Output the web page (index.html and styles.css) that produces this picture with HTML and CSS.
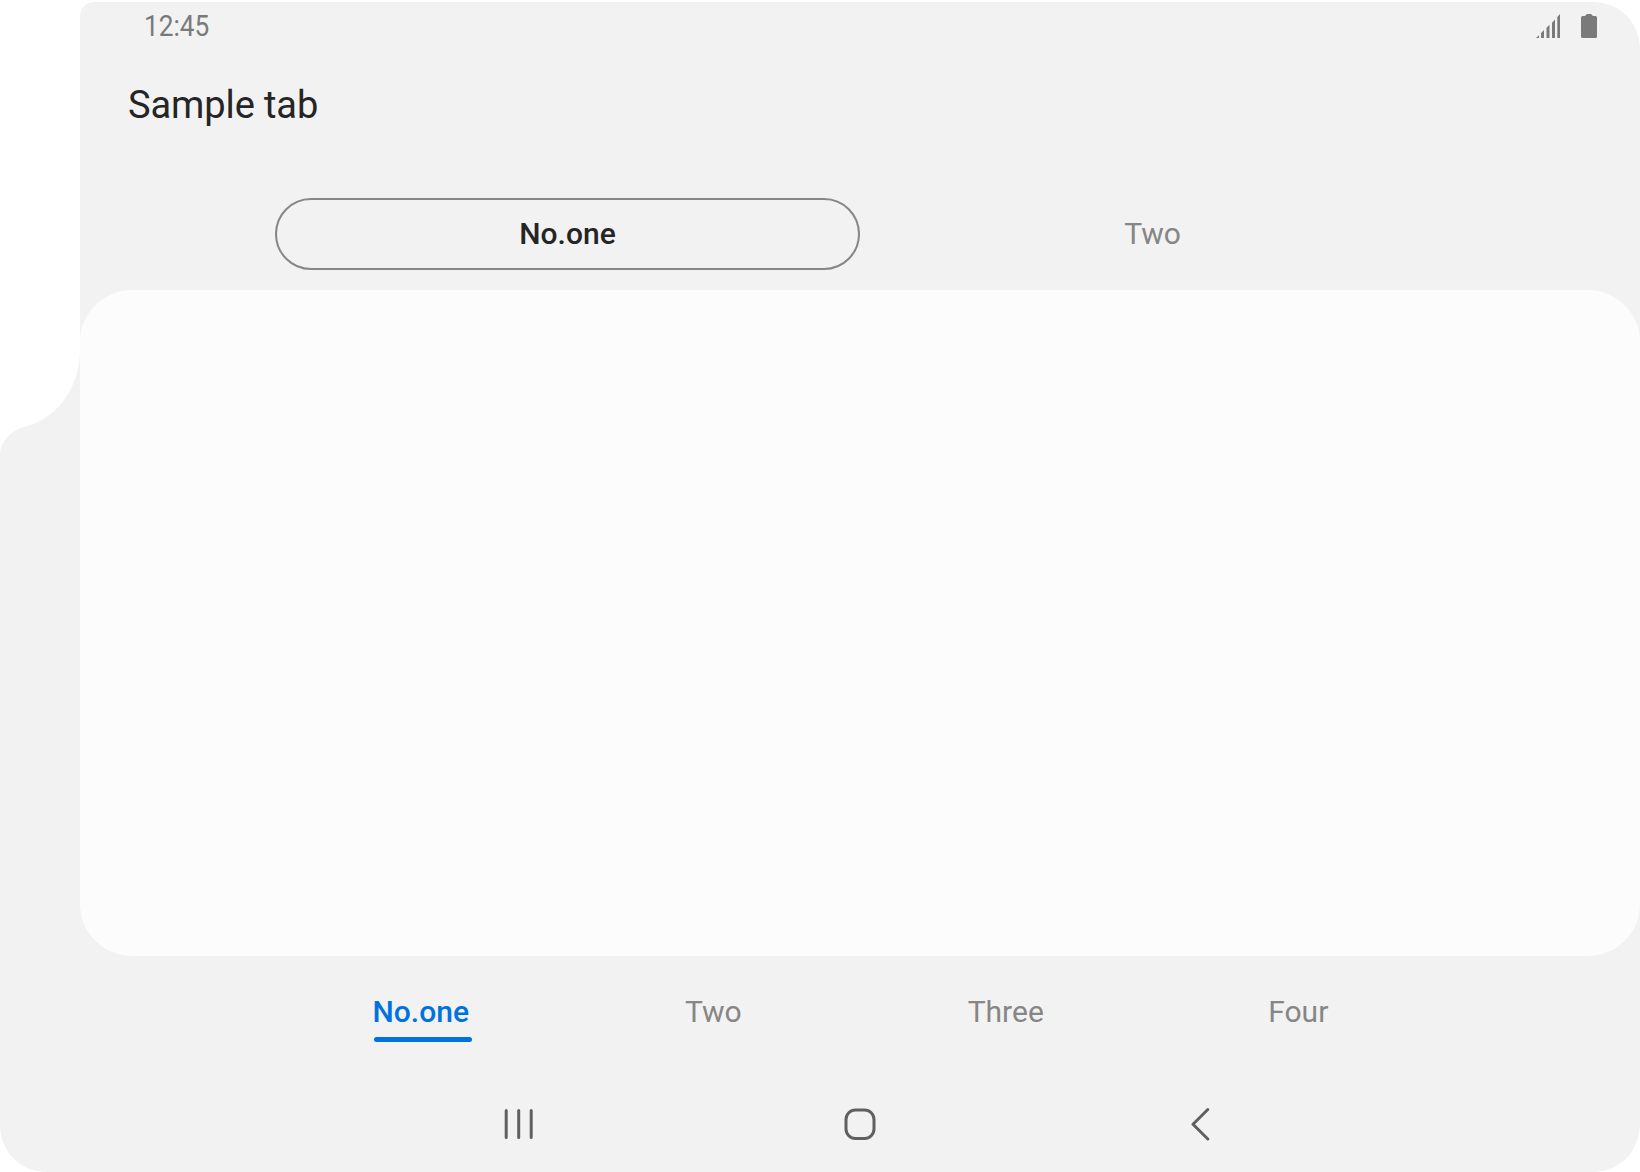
FILE: index.html
```html
<!DOCTYPE html>
<html lang="en">
<head>
<meta charset="utf-8">
<title>Sample tab</title>
<link rel="stylesheet" href="styles.css">
</head>
<body>
<div class="device">
  <svg class="device-shape" viewBox="0 0 1640 1172" aria-hidden="true">
    <path fill="#f2f2f2" d="M80 17C80 8 86 2 95 2H1592C1620 2 1640 22 1640 50V1122C1640 1151 1621 1172 1592 1172H48C20 1172 0 1152 0 1124V456C0 441 11 430 27 426C58 418 80 386 80 350Z"/>
  </svg>
  <div class="screen">
    <header class="status">
      <span class="clock">12:45</span>
      <div class="status-icons">
        <svg width="25" height="25" viewBox="0 0 25 25" fill="#7a7a7a"><path d="M0 24L3 21.2V24ZM5 24V18.9L8 16.1V24ZM10.5 24V13.8L13.5 10.8V24ZM16 24V8.7L19 5.6V24ZM21.3 24V3L24 0V24Z"/></svg>
        <svg width="16" height="25" viewBox="0 0 16 25" fill="#7a7a7a"><path d="M4 2L6 0H10L12 2H14.5Q16 2 16 3.5V22.5Q16 24 14.5 24H1.5Q0 24 0 22.5V3.5Q0 2 1.5 2Z"/></svg>
      </div>
    </header>
    <h1 class="title">Sample tab</h1>
    <nav class="sub-tabs">
      <span class="sub-tab sub-tab-active">No.one</span>
      <span class="sub-tab">Two</span>
    </nav>
    <main class="card"></main>
    <nav class="tabs">
      <span class="tab tab-active">No.one</span>
      <span class="tab">Two</span>
      <span class="tab">Three</span>
      <span class="tab">Four</span>
    </nav>
    <footer class="navbar">
      <svg width="34" height="34" viewBox="0 0 34 34"><path d="M4.200 3.500V30.500M16.700 3.500V30.500M29.200 3.500V30.500"/></svg>
      <svg width="34" height="34" viewBox="0 0 34 34"><rect x="3" y="3" width="28" height="28.500" rx="9.500"/></svg>
      <svg width="34" height="34" viewBox="0 0 34 34"><path d="M23.800 2.500L9 17.200L23.800 32"/></svg>
    </footer>
  </div>
</div>
</body>
</html>
```

FILE: styles.css
```css
* { box-sizing: border-box; }
body {
  margin: 0;
  background: #fff;
  font-family: Roboto, "Liberation Sans", sans-serif;
}
.device {
  position: relative;
  width: 1640px;
  height: 1172px;
  padding-left: 80px;
  overflow: hidden;
}
.device-shape {
  position: absolute;
  inset: 0;
  width: 1640px;
  height: 1172px;
}
.screen {
  position: relative;
  display: flex;
  flex-direction: column;
  height: 1172px;
}
.status {
  display: flex;
  justify-content: space-between;
  align-items: flex-start;
  height: 70px;
  padding: 8px 43px 0 64px;
}
.clock {
  font-size: 30px;
  line-height: 36px;
  color: #7a7a7a;
  transform: scaleX(0.875);
  transform-origin: left;
}
.status-icons {
  display: flex;
  gap: 20px;
  padding-top: 6px;
}
.title {
  height: 128px;
  margin: 0;
  padding: 12px 0 0 48px;
  font-size: 38px;
  line-height: 46px;
  font-weight: 400;
  letter-spacing: -0.1px;
  color: #252525;
}
.sub-tabs {
  display: flex;
  height: 92px;
  padding: 0 195px;
}
.sub-tab {
  width: 585px;
  height: 72px;
  border: 2px solid transparent;
  border-radius: 36px;
  text-align: center;
  font-size: 30px;
  line-height: 68px;
  color: #868686;
}
.sub-tab-active {
  border-color: #868686;
  font-weight: 500;
  color: #252525;
}
.card {
  height: 666px;
  border-radius: 52px;
  background: #fcfcfc;
}
.tabs {
  display: flex;
  height: 134px;
  padding: 38px 195px 0;
}
.tab {
  position: relative;
  width: 292.5px;
  height: 48px;
  padding-right: 1px;
  text-align: center;
  font-size: 30px;
  line-height: 36px;
  color: #868686;
}
.tab-active {
  font-weight: 500;
  color: #0072de;
}
.tab-active::after {
  content: "";
  position: absolute;
  left: 99px;
  top: 43px;
  width: 98px;
  height: 5px;
  border-radius: 2.5px;
  background: #0072de;
}
.navbar {
  display: flex;
  justify-content: space-between;
  padding: 17px 422px 0;
  height: 82px;
}
.navbar svg {
  fill: none;
  stroke: #606060;
  stroke-width: 3;
  stroke-linecap: round;
  stroke-linejoin: round;
}
```
